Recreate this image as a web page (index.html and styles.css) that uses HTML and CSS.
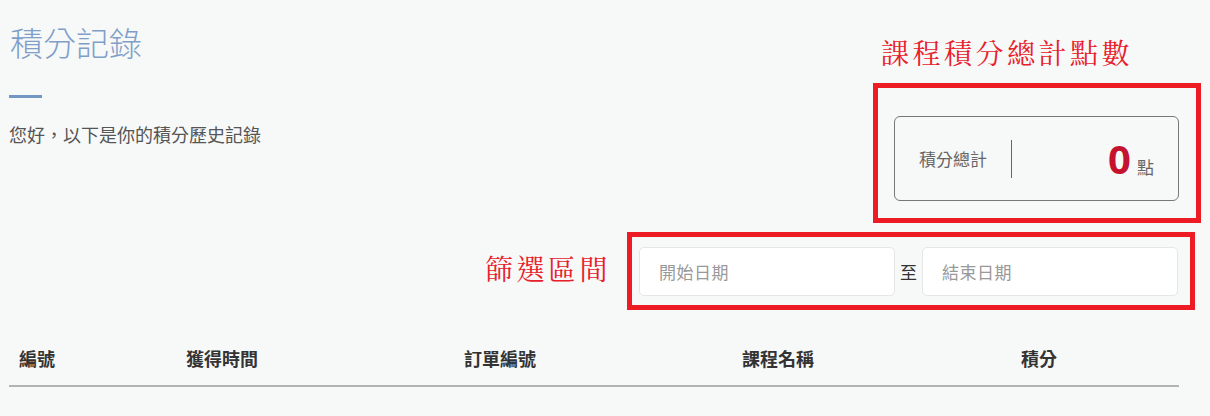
FILE: index.html
```html
<!DOCTYPE html>
<html>
<head>
    <meta charset="UTF-8">
    <title>積分記錄</title>
    <link rel="stylesheet" href="styles.css">
</head>
<body>
    <div class="page">
        <div class="top-row">
            <div class="intro">
                <h1 class="page-title">積分記錄</h1>
                <div class="title-bar"></div>
                <p class="intro-text">您好，以下是你的積分歷史記錄</p>
            </div>
            <div class="total-card">
                <span class="total-label">積分總計</span>
                <span class="total-divider"></span>
                <span class="total-value"><b>0</b><small>點</small></span>
            </div>
        </div>

        <div class="filter-row">
            <input class="date-input" type="text" placeholder="開始日期">
            <span class="filter-sep">至</span>
            <input class="date-input" type="text" placeholder="結束日期">
        </div>

        <div class="points-table">
            <div class="th">編號</div>
            <div class="th">獲得時間</div>
            <div class="th">訂單編號</div>
            <div class="th">課程名稱</div>
            <div class="th">積分</div>
        </div>

        <!-- annotations drawn over the screenshot -->
        <div class="note note-total">課程積分總計點數</div>
        <div class="note-box box-total"></div>
        <div class="note note-filter">篩選區間</div>
        <div class="note-box box-filter"></div>
    </div>
</body>
</html>
```

FILE: styles.css
```css
body {
    margin: 0;
    background-color: #f7f8f8;
    font-family: "Noto Sans CJK TC", "Noto Sans", sans-serif;
    color: #333;
}

.page {
    position: relative;
    width: 1170px;
    margin-left: 9px;
    height: 416px;
}

.top-row {
    display: grid;
    grid-template-columns: 1fr 285px;
    align-items: start;
}

.page-title {
    margin: 22px 0 0 1px;
    font-size: 33px;
    line-height: 40px;
    font-weight: 300;
    color: #7f9fc9;
}

.title-bar {
    width: 33px;
    height: 3px;
    margin-top: 33px;
    background-color: #7496c3;
}

.intro-text {
    margin: 24px 0 0;
    font-size: 18px;
    line-height: 24px;
    color: #555;
}

.total-card {
    display: flex;
    align-items: center;
    height: 83px;
    margin-top: 116px;
    padding: 0 24px;
    border: 1px solid #777;
    border-radius: 6px;
}

.total-label {
    font-size: 17px;
    color: #666;
}

.total-divider {
    width: 1px;
    height: 38px;
    margin-left: 24px;
    background-color: #666;
}

.total-value {
    flex: 1;
    display: flex;
    justify-content: flex-end;
    align-items: baseline;
    gap: 6px;
}

.total-value b {
    font-family: "Noto Sans", sans-serif;
    font-size: 40px;
    line-height: 40px;
    color: #c4122f;
}

.total-value small {
    font-size: 17px;
    color: #666;
}

.filter-row {
    display: flex;
    justify-content: flex-end;
    align-items: center;
    gap: 5px;
    margin-top: 46px;
    padding-right: 1px;
}

.date-input {
    box-sizing: border-box;
    width: 256px;
    height: 49px;
    padding: 0 19px;
    border: 1px solid #e6e6e6;
    border-radius: 5px;
    background-color: #fff;
    font-family: inherit;
    font-size: 17px;
    letter-spacing: 0.5px;
}

.date-input::placeholder {
    color: #999;
}

.filter-sep {
    font-size: 17px;
    color: #333;
}

.points-table {
    display: grid;
    grid-template-columns: 167px 278px 278px 279px 168px;
    margin-top: 35px;
    border-bottom: 2px solid #b3b3b3;
}

.th {
    padding: 15px 10px;
    font-size: 18px;
    line-height: 24px;
    font-weight: bold;
    color: #333;
}

.note {
    position: absolute;
    font-family: "AR PL UKai TW", "TW-Kai", "Noto Serif CJK TC", "Noto Sans CJK TC", serif;
    font-size: 28px;
    line-height: 32px;
    letter-spacing: 3.5px;
    color: #e8202a;
}

.note-total {
    left: 872px;
    top: 36px;
}

.note-filter {
    left: 476px;
    top: 252px;
}

.note-box {
    position: absolute;
    box-sizing: border-box;
    border: 5px solid #ed1c24;
}

.box-total {
    left: 864px;
    top: 83px;
    width: 328px;
    height: 140px;
}

.box-filter {
    left: 618px;
    top: 232px;
    width: 568px;
    height: 78px;
}
```
